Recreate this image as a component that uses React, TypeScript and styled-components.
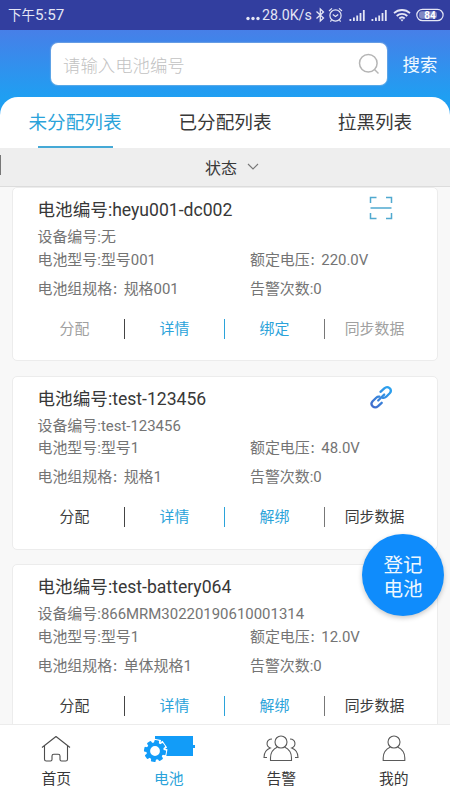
import React from "react";
import styled, { createGlobalStyle } from "styled-components";

const GlobalStyle = createGlobalStyle`
  * { box-sizing: border-box; }
  body {
    margin: 0;
    font-family: Roboto, "Noto Sans CJK SC", sans-serif;
    color: #383838;
  }
`;

const BLUE = "#2ba3da";

const Screen = styled.div`
  position: relative;
  width: 450px;
  height: 800px;
  display: flex;
  flex-direction: column;
  overflow: hidden;
  background: #f8f8f8;
`;

const StatusBar = styled.div`
  flex: none;
  height: 30px;
  padding: 0 6px 0 8px;
  display: flex;
  align-items: center;
  justify-content: space-between;
  background: #323e9f;
  color: #e4e6f5;
`;

const Clock = styled.span`
  font-size: 15.2px;
  line-height: 30px;
  span { font-size: 13.5px; }
`;

const StatusIcons = styled.div`
  display: flex;
  align-items: center;
  height: 30px;
  svg { display: block; flex: none; }
`;

const Speed = styled.span`
  font-size: 14.2px;
  line-height: 30px;
  width: 52px;
  margin-left: 2px;
  white-space: nowrap;
`;

const Header = styled.div`
  flex: none;
  height: 118px;
  background: linear-gradient(180deg, #477fe8 0, #1f9ff2 67px);
`;

const SearchRow = styled.div`
  height: 67px;
  padding: 13px 12px 12px 51px;
  display: flex;
  align-items: center;
`;

const SearchBox = styled.div`
  width: 336px;
  height: 42px;
  padding: 0 7px 0 12px;
  display: flex;
  align-items: center;
  justify-content: space-between;
  border-radius: 7px;
  background: #fff;
  color: #c2c2c2;
  font-size: 17.4px;
  font-weight: 300;
  box-shadow: 0 0 1px 1px rgba(160, 190, 220, 0.45);
`;

const SearchButton = styled.span`
  margin: -2px 0 0 15.5px;
  font-size: 17.4px;
  color: #f2faff;
  white-space: nowrap;
`;

const Tabs = styled.div`
  height: 51px;
  display: flex;
  border-radius: 18px 18px 0 0;
  background: #fff;
`;

const Tab = styled.div<{ $active?: boolean }>`
  flex: 1;
  display: flex;
  flex-direction: column;
  align-items: center;
  height: 51px;
  font-size: 18.6px;
  line-height: 49px;
  padding-top: 2px;
  color: ${(p) => (p.$active ? BLUE : "#383838")};
  &::after {
    content: "";
    width: 75px;
    height: 2px;
    margin-top: -2px;
    background: ${(p) => (p.$active ? "#45a9d6" : "transparent")};
  }
`;

const FilterBar = styled.div`
  flex: none;
  height: 39px;
  display: flex;
  align-items: center;
  background: #eee;
  border-bottom: 1px solid #dcdcdc;
`;

const EdgeMark = styled.span`
  width: 1px;
  height: 20px;
  margin-top: -4px;
  background: #777;
`;

const Filter = styled.div`
  flex: 1;
  padding-left: 13px;
  display: flex;
  align-items: center;
  justify-content: center;
  gap: 10px;
  font-size: 16px;
`;

const List = styled.div`
  flex: 1;
  min-height: 0;
  overflow: hidden;
  padding: 0 12px;
`;

const Card = styled.div`
  height: 174px;
  margin-bottom: 14.7px;
  padding: 0 12px;
  border: 1px solid #ececec;
  border-radius: 5px;
  background: #fff;
`;

const CardHead = styled.div`
  height: 39px;
  padding: 7px 32px 0 12.500px;
  display: flex;
  justify-content: space-between;
  font-size: 17.6px;
  line-height: 30px;
  svg { display: block; margin-top: 1px; }
`;

const InfoRow = styled.div<{ $height: number }>`
  height: ${(p) => p.$height}px;
  padding-left: 12.500px;
  display: grid;
  grid-template-columns: 212.500px 1fr;
  font-size: 14.950px;
  line-height: 20px;
  white-space: nowrap;
  color: #747474;
`;

const Colon = styled.span`
  font-size: 11.500px;
  font-weight: 500;
  line-height: 1;
`;

const Actions = styled.div`
  display: grid;
  grid-template-columns: repeat(4, 100px);
  height: 19px;
  margin-top: -1px;
  font-size: 14.900px;
  line-height: 20px;
  text-align: center;
`;

const Action = styled.span<{ $tone: string; $rule?: string }>`
  color: ${(p) => p.$tone};
  border-right: 1px solid ${(p) => p.$rule || "transparent"};
`;

const RegisterButton = styled.button`
  position: absolute;
  left: 362px;
  top: 534px;
  width: 82px;
  height: 82px;
  padding: 5px 0 0;
  border: 0;
  border-radius: 50%;
  background: #0f8cfc;
  color: #eef8ff;
  font: 19.600px/24px Roboto, "Noto Sans CJK SC", sans-serif;
  box-shadow: 0 2px 5px rgba(0, 0, 0, 0.22);
`;

const NavBar = styled.nav`
  flex: none;
  height: 76px;
  display: grid;
  grid-template-columns: repeat(4, 1fr);
  background: #fff;
  border-top: 1px solid #ececec;
`;

const NavItem = styled.div<{ $active?: boolean }>`
  display: flex;
  flex-direction: column;
  align-items: center;
  padding-top: 10px;
  font-size: 14.800px;
  line-height: 20px;
  color: ${(p) => (p.$active ? BLUE : "#383838")};
  svg { display: block; margin-bottom: 6px; }
`;

const Signal = () => (
  <svg width="17" height="13" viewBox="0 0 17 13" fill="#e4e6f5">
    <path d="M.5 10h1.800v2H.5zM4 8.600h1.800V12H4zM7.300 6.600h1.800V12H7.300zM10.600 4h1.800v8h-1.800zM13.900 1h1.800v11h-1.800z" />
  </svg>
);

const SignalPair = styled.div`
  display: flex;
  gap: 5px;
  margin: 0 5px;
`;

const BatteryLevel = styled.div`
  margin-left: 5px;
`;

const StatusGlyphs = () => (
  <StatusIcons>
    <svg width="14" height="12" viewBox="0 0 14 12" fill="#e4e6f5">
      <circle cx="2" cy="9.500" r="1.700" /><circle cx="7" cy="9.500" r="1.700" /><circle cx="12" cy="9.500" r="1.700" />
    </svg>
    <Speed>28.0K/s</Speed>
    <svg width="13" height="16" viewBox="0 0 13 16" fill="none" stroke="#e4e6f5" strokeWidth="1.300">
      <path d="M2.500 4.500l7 6.500-3.200 3V2l3.200 3-7 6.500" />
    </svg>
    <svg width="17" height="16" viewBox="0 0 17 16" fill="none" stroke="#e4e6f5" strokeWidth="1.200">
      <circle cx="8.500" cy="8.500" r="5.600" />
      <path d="M2 4l3-2.600M15 4l-3-2.600M5.800 7.500l2.700 2 2.700-2M4.500 13.200L3.400 14.600M12.500 13.200l1.100 1.400" />
    </svg>
    <SignalPair><Signal /><Signal /></SignalPair>
    <svg width="18" height="14" viewBox="0 0 18 14" fill="none" stroke="#e4e6f5" strokeWidth="1.800">
      <path d="M1 5.200c4.600-4.300 11.400-4.300 16 0M3.700 8c3-2.900 7.600-2.900 10.600 0M6.300 10.500c1.600-1.500 3.800-1.500 5.400 0" />
      <path d="M7.300 11.600h3.400L9 13.600z" fill="#e4e6f5" stroke="none" />
    </svg>
    <BatteryLevel>
      <svg width="28" height="14" viewBox="0 0 28 14">
        <rect x=".8" y="1.300" width="26.300" height="11.400" rx="5.700" fill="none" stroke="#e4e6f5" strokeWidth="1.200" />
        <rect x="3" y="3.300" width="18" height="7.400" rx="3" fill="#8188c3" />
        <text x="14" y="10.700" textAnchor="middle" fontSize="10" fontWeight="700" fill="#fff">84</text>
      </svg>
    </BatteryLevel>
  </StatusIcons>
);

const ScanIcon = () => (
  <svg width="24" height="24" viewBox="0 0 24 24" fill="none" stroke="#50a9cf" strokeWidth="1.500">
    <path d="M1.500 7V1.500H7.500M17 1.500h5.500V7M1.500 17v5.500H7.500M17 22.500h5.500V17M1.500 12h21" />
  </svg>
);

const LinkIcon = () => (
  <svg width="24" height="24" viewBox="0 0 24 24" fill="none" strokeWidth="2.300" strokeLinecap="round" strokeLinejoin="round">
    <defs>
      <linearGradient id="link-blue" gradientUnits="userSpaceOnUse" x1="20" y1="3" x2="4" y2="22">
        <stop offset="0" stopColor="#2ba2ef" />
        <stop offset="1" stopColor="#426dcc" />
      </linearGradient>
    </defs>
    <g stroke="url(#link-blue)">
      <path d="M11.500 6.800l3.800-3.500c3.600-3.200 8.600 1.300 5.400 4.900l-3.500 3.500c-1.100 1-2.200 1.300-3.300 1.100" />
      <path d="M12.700 17.800l-3.600 3.400c-3.800 3.200-8.700-1.300-5.500-5l3.600-3.500c1-1 2.100-1.300 3.200-1.100" />
      <path d="M9.200 15.500l6-6" />
    </g>
  </svg>
);

const HomeIcon = () => (
  <svg width="30" height="28" viewBox="0 0 30 28" fill="none" stroke="#4c4c4c" strokeWidth="1.100" strokeLinejoin="round">
    <path d="M1 12.500L15 1.500l14 11M3.500 11v13.200q0 1.800 1.800 1.800h4.200q1.500 0 1.500-1.500V21q0-1.800 1.800-1.800h4.400q1.800 0 1.800 1.800v3.500q0 1.500 1.500 1.500h4.200q1.800 0 1.800-1.800V11" />
  </svg>
);

const teeth = [0, 45, 90, 135, 180, 225, 270, 315];

const BatteryIcon = () => (
  <svg width="52" height="28" viewBox="0 0 52 28" fill="#129cf8">
    <path d="M12 1h38v9h2v3h-2v8H12z" />
    <g stroke="#fff" strokeWidth="3" fill="#fff">
      <circle cx="12" cy="16" r="8" />
      {teeth.map((a) => <rect key={a} x="9.500" y="5.500" width="5" height="4" transform={`rotate(${a + 10} 12 16)`} />)}
    </g>
    <circle cx="12" cy="16" r="6.800" fill="none" stroke="#129cf8" strokeWidth="3.800" />
    {teeth.map((a) => <rect key={a} x="9.600" y="5" width="4.800" height="4.500" rx="1" transform={`rotate(${a + 10} 12 16)`} />)}
  </svg>
);

const PeopleIcon = () => (
  <svg width="36" height="28" viewBox="0 0 36 28" fill="none" stroke="#5a5a5a" strokeWidth="1.100">
    <circle cx="18" cy="7" r="6" />
    <path d="M14.500 12C10 14 7.500 18 7.500 23v2.500h21V23c0-5-2.500-9-7-11" />
    <path d="M9 4C3 4.300 2.500 11 7.300 13 3.300 14.500 1 18 1 22.500h3M27 4c6 .3 6.500 7 1.700 9 4 1.500 6.300 5 6.300 9.500h-3" />
  </svg>
);

const PersonIcon = () => (
  <svg width="24" height="28" viewBox="0 0 24 28" fill="none" stroke="#5a5a5a" strokeWidth="1.100">
    <circle cx="12" cy="7" r="6" />
    <path d="M8.500 12C4 14 1.200 18 1.200 23v2.500h21.600V23c0-5-2.800-9-7.300-11" />
  </svg>
);

type Battery = {
  id: string;
  device: string;
  model: string;
  spec: string;
  voltage: string;
  bound: boolean;
};

const batteries: Battery[] = [
  { id: "heyu001-dc002", device: "无", model: "型号001", spec: "规格001", voltage: "220.0V", bound: false },
  { id: "test-123456", device: "test-123456", model: "型号1", spec: "规格1", voltage: "48.0V", bound: true },
  { id: "test-battery064", device: "866MRM30220190610001314", model: "型号1", spec: "单体规格1", voltage: "12.0V", bound: true },
];

const BatteryCard = ({ id, device, model, spec, voltage, bound }: Battery) => {
  const tone = bound ? "#3c3c3c" : "#a0a0a0";
  return (
    <Card>
      <CardHead>
        <span>电池编号:{id}</span>
        {bound ? <LinkIcon /> : <ScanIcon />}
      </CardHead>
      <InfoRow $height={22.5}><span>设备编号:{device}</span></InfoRow>
      <InfoRow $height={29}>
        <span>电池型号:{model}</span>
        <span>额定电压<Colon>：</Colon>{voltage}</span>
      </InfoRow>
      <InfoRow $height={41}>
        <span>电池组规格<Colon>：</Colon>{spec}</span>
        <span>告警次数:0</span>
      </InfoRow>
      <Actions>
        <Action $tone={tone} $rule="#444">分配</Action>
        <Action $tone={BLUE} $rule={BLUE}>详情</Action>
        <Action $tone={BLUE} $rule="#777">{bound ? "解绑" : "绑定"}</Action>
        <Action $tone={tone}>同步数据</Action>
      </Actions>
    </Card>
  );
};

export default function App() {
  return (
    <Screen>
      <GlobalStyle />
      <StatusBar>
        <Clock><span>下午</span>5:57</Clock>
        <StatusGlyphs />
      </StatusBar>
      <Header>
        <SearchRow>
          <SearchBox>
            <span>请输入电池编号</span>
            <svg width="22" height="22" viewBox="0 0 22 22" fill="none" stroke="#b5b5b5" strokeWidth="1.500">
              <circle cx="10.300" cy="10.300" r="8.800" />
              <path d="M16.500 16.500l4 4" />
            </svg>
          </SearchBox>
          <SearchButton>搜索</SearchButton>
        </SearchRow>
        <Tabs>
          <Tab $active>未分配列表</Tab>
          <Tab>已分配列表</Tab>
          <Tab>拉黑列表</Tab>
        </Tabs>
      </Header>
      <FilterBar>
        <EdgeMark />
        <Filter>
          状态
          <svg width="12" height="8" viewBox="0 0 12 8" fill="none" stroke="#777" strokeWidth="1.100">
            <path d="M1 1l5 5 5-5" />
          </svg>
        </Filter>
      </FilterBar>
      <List>
        {batteries.map((b) => <BatteryCard key={b.id} {...b} />)}
      </List>
      <NavBar>
        <NavItem><HomeIcon />首页</NavItem>
        <NavItem $active><BatteryIcon />电池</NavItem>
        <NavItem><PeopleIcon />告警</NavItem>
        <NavItem><PersonIcon />我的</NavItem>
      </NavBar>
      <RegisterButton>登记<br />电池</RegisterButton>
    </Screen>
  );
}
